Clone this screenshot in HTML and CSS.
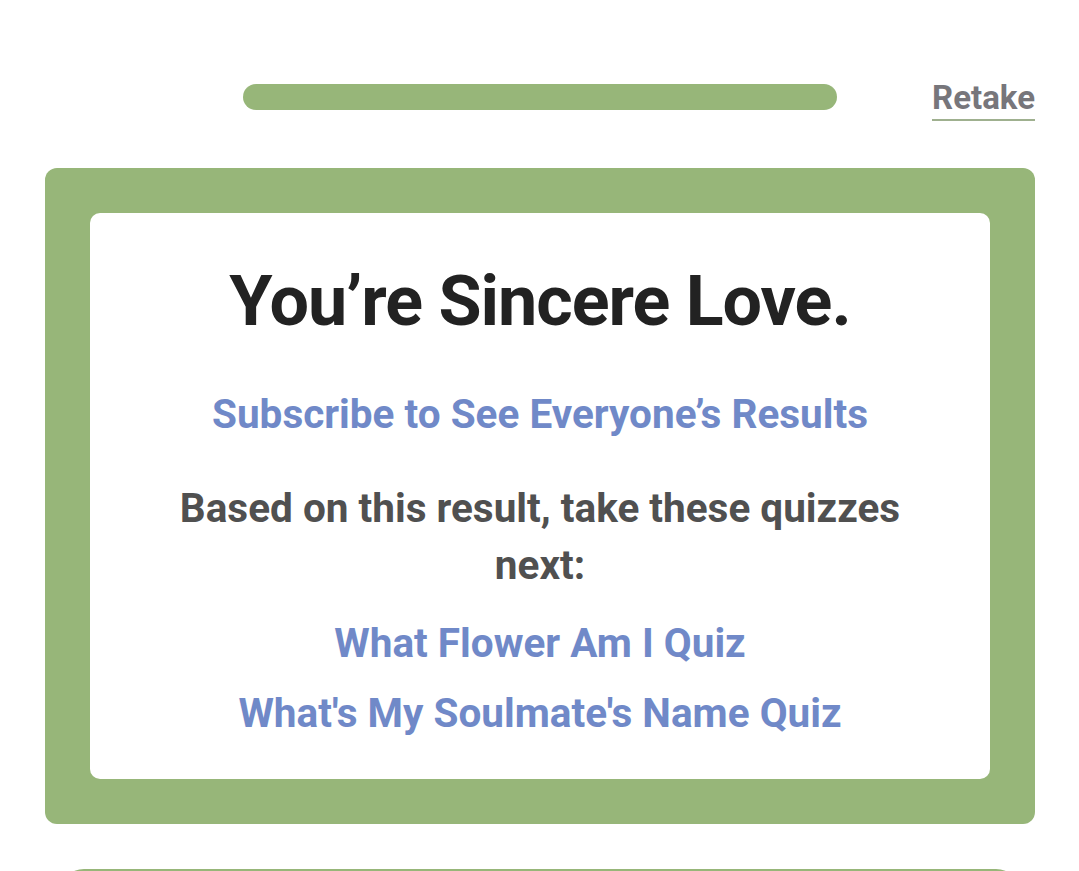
FILE: index.html
```html
<!DOCTYPE html>
<html lang="en">
<head>
<meta charset="utf-8">
<link rel="stylesheet" href="styles.css">
</head>
<body>
<div class="page">
  <header class="top">
    <div class="progress"></div>
    <a class="retake" href="#">Retake</a>
  </header>
  <section class="result">
    <div class="inner">
      <h1 class="title">You’re Sincere Love.</h1>
      <a class="subscribe" href="#">Subscribe to See Everyone’s Results</a>
      <p class="based">Based on this result, take these quizzes next:</p>
      <a class="quiz first" href="#">What Flower Am I Quiz</a>
      <a class="quiz" href="#">What's My Soulmate's Name Quiz</a>
    </div>
  </section>
  <div class="next-box"></div>
</div>
</body>
</html>
```
FILE: styles.css
```css
html, body {
  margin: 0;
  padding: 0;
  background: #fff;
}
body {
  font-family: Roboto, "Noto Sans", sans-serif;
}
.page {
  width: 990px;
  height: 871px;
  overflow: hidden;
  margin-left: 45px;
}
.top {
  display: flex;
  align-items: flex-start;
  height: 168px;
}
.progress {
  width: 594px;
  height: 26px;
  border-radius: 13px;
  background: #97b679;
  margin-left: 198px;
  margin-top: 84px;
}
.retake {
  margin-left: auto;
  margin-top: 81px;
  color: #77767b;
  font-weight: 700;
  font-size: 33px;
  line-height: 33px;
  text-decoration: none;
  border-bottom: 2px solid #9fb08f;
  padding-bottom: 5px;
}
.result {
  background: #97b679;
  border-radius: 12px;
  padding: 45px;
}
.inner {
  background: #fff;
  border-radius: 10px;
  display: flex;
  flex-direction: column;
  align-items: center;
  text-align: center;
  padding: 48px 60px 31px;
}
.title {
  margin: 0;
  font-size: 70px;
  font-weight: 700;
  letter-spacing: -1px;
  color: #222;
  line-height: 80px;
}
.subscribe {
  margin-top: 48px;
  font-size: 40.5px;
  font-weight: 700;
  color: #7089c8;
  text-decoration: none;
  line-height: 50px;
}
.based {
  margin: 41px 0 0;
  font-size: 40.5px;
  font-weight: 700;
  color: #505050;
  line-height: 57px;
}
.quiz {
  font-size: 40.5px;
  font-weight: 700;
  color: #7089c8;
  text-decoration: none;
  line-height: 70px;
}
.quiz.first {
  margin-top: 14px;
}
.next-box {
  margin: 45px 15px 0;
  height: 60px;
  border-radius: 24px;
  background: #97b679;
}
```
